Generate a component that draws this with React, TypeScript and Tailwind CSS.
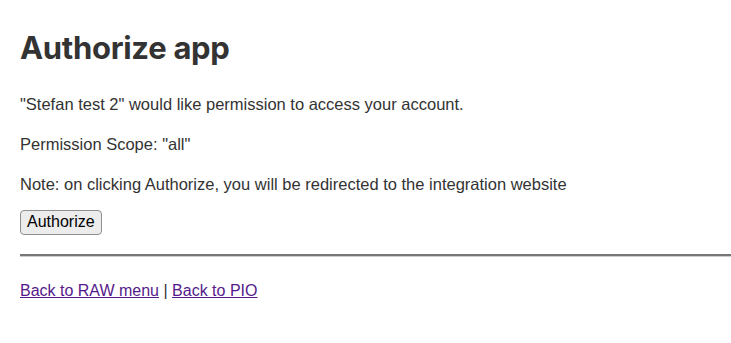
export default function App() {
  return (
    <div className="min-h-screen bg-white pl-5 text-[#333] text-[16.5px] leading-6 font-['Helvetica','Liberation_Sans',Arial,sans-serif]">
      <h1 className="text-[31px] font-bold leading-[48px] tracking-[-0.3px] pt-[24px] mb-[20px] font-['Inter','Liberation_Sans',sans-serif]">
        Authorize app
      </h1>

      <p className="mb-4">"Stefan test 2" would like permission to access your account.</p>
      <p className="mb-4">Permission Scope: "all"</p>
      <p className="mb-[13px]">Note: on clicking Authorize, you will be redirected to the integration website</p>

      <form>
        <button
          type="button"
          className="h-[25px] px-[6px] rounded-[4px] border border-[#8f8f8f] bg-[#ececec] text-black text-[16px] leading-5"
        >
          Authorize
        </button>
      </form>

      <hr className="mt-[19px] border-0 border-t-2 border-t-[#777] shadow-[0_1px_0_#ccc]" />

      <p className="mt-[23px] text-[16px]">
        <a href="#" className="text-[#551a8b] underline">Back to RAW menu</a> |{" "}
        <a href="#" className="text-[#551a8b] underline">Back to PIO</a>
      </p>
    </div>
  );
}
